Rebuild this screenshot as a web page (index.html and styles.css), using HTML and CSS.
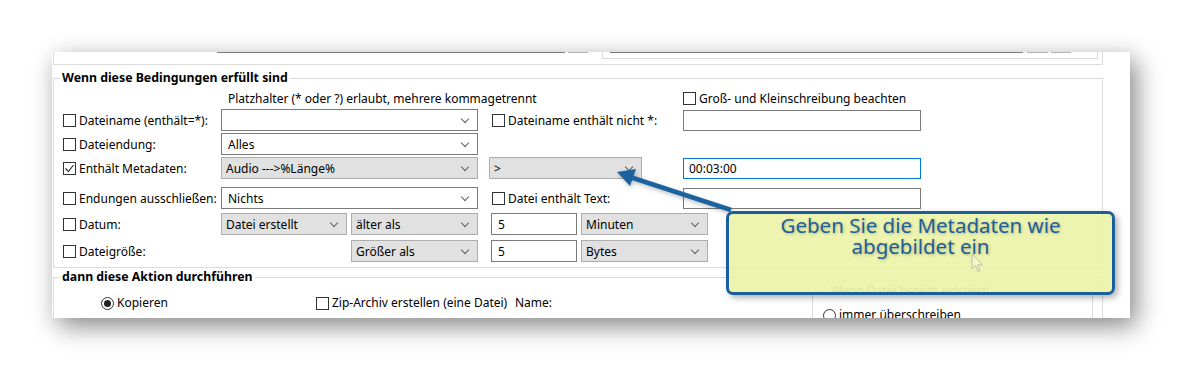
FILE: index.html
```html
<!DOCTYPE html>
<html lang="de">

<head>
    <meta charset="UTF-8">
    <title>Bedingungen</title>
    <link rel="stylesheet" href="styles.css">
</head>

<body>
    <div class="shot">
        <div class="panel">
            <!-- Rest des vorherigen Bereichs -->
            <div class="prev">
                <div class="prev-field left"></div>
                <div class="prev-btn"></div>
                <div class="prev-group">
                    <div class="prev-field right"></div>
                    <div class="prev-btn first"></div>
                    <div class="prev-btn"></div>
                </div>
            </div>

            <fieldset class="group cond">
                <legend>Wenn diese Bedingungen erfüllt sind</legend>
                <div class="rows">
                    <div class="hint-row">
                        <span class="hint">Platzhalter (* oder ?) erlaubt, mehrere kommagetrennt</span>
                        <label class="check"><span class="box"></span>Groß- und Kleinschreibung beachten</label>
                    </div>

                    <div class="row r1">
                        <label class="check lbl"><span class="box"></span>Dateiname (enthält=*):</label>
                        <div class="combo w-full"></div>
                        <label class="check lbl2"><span class="box"></span>Dateiname enthält nicht *:</label>
                        <div class="text w-edit"></div>
                    </div>

                    <div class="row r2">
                        <label class="check lbl"><span class="box"></span>Dateiendung:</label>
                        <div class="combo w-full">Alles</div>
                    </div>

                    <div class="row r3">
                        <label class="check lbl"><span class="box on"><svg width="11" height="11" viewBox="0 0 11 11"><polyline points="1.5,5.5 4.5,8.5 9.5,2" fill="none" stroke="#222" stroke-width="1.1"/></svg></span>Enthält Metadaten:</label>
                        <div class="combo list w-full">Audio ---&gt;%Länge%</div>
                        <div class="combo list w-op">&gt;</div>
                        <div class="text w-edit focus">00:03:00</div>
                    </div>

                    <div class="row r4">
                        <label class="check lbl"><span class="box"></span>Endungen ausschließen:</label>
                        <div class="combo w-full">Nichts</div>
                        <label class="check lbl2"><span class="box"></span>Datei enthält Text:</label>
                        <div class="text w-edit"></div>
                    </div>

                    <div class="row r5">
                        <label class="check lbl"><span class="box"></span>Datum:</label>
                        <div class="combo list w-half">Datei erstellt</div>
                        <div class="combo list w-half2 next">älter als</div>
                        <div class="text w-num">5</div>
                        <div class="combo list w-unit">Minuten</div>
                    </div>

                    <div class="row r6">
                        <label class="check lbl"><span class="box"></span>Dateigröße:</label>
                        <div class="combo list w-half2 skip">Größer als</div>
                        <div class="text w-num">5</div>
                        <div class="combo list w-unit">Bytes</div>
                    </div>
                </div>
            </fieldset>

            <fieldset class="group action">
                <legend>dann diese Aktion durchführen</legend>
                <div class="action-body">
                    <label class="radio copy"><span class="dot on"></span>Kopieren</label>
                    <label class="check zip"><span class="box"></span>Zip-Archiv erstellen (eine Datei)</label>
                    <span class="name">Name:</span>
                    <fieldset class="sub">
                        <legend>Wenn Datei bereits existiert:</legend>
                        <label class="radio"><span class="dot"></span>immer überschreiben</label>
                    </fieldset>
                </div>
            </fieldset>
        </div>

        <svg class="arrow" width="1182" height="371" viewBox="0 0 1182 371">
            <line x1="731" y1="210" x2="630" y2="177" stroke="#1a62a0" stroke-width="4.5"/>
            <polygon points="617,172 636,169 630,186" fill="#1a62a0"/>
        </svg>

        <div class="tip">
            Geben Sie die Metadaten wie<br>abgebildet ein
            <svg class="cursor" width="14" height="21" viewBox="0 0 14 21">
                <path d="M1 1 L1 16 L4.5 12.5 L7 18.5 L9 17.6 L6.6 11.8 L11.5 11.8 Z" fill="rgba(255,255,255,.35)" stroke="#b9bfa0" stroke-width="1"/>
            </svg>
        </div>
    </div>
</body>

</html>
```

FILE: styles.css
```css
* {
    box-sizing: border-box;
}

body {
    margin: 0;
    background: #fff;
    font-family: "Noto Sans", "Liberation Sans", sans-serif;
    font-size: 12px;
    color: #000;
}

.shot {
    position: relative;
    width: 1182px;
    height: 371px;
    padding: 52px 0 0 52px;
    overflow: hidden;
}

.panel {
    width: 1078px;
    height: 266px;
    background: #fff;
    overflow: hidden;
    box-shadow: 6px 8px 24px rgba(0, 0, 0, 0.48);
}


/* Reste des oberen Bereichs */

.prev {
    display: flex;
    align-items: flex-start;
    width: 1050px;
    height: 13px;
    margin-left: 1px;
    border: 1px solid #dcdcdc;
    border-top: 0;
}

.prev-field {
    height: 1px;
    background: #7a7a7a;
}

.prev-field.left {
    width: 348px;
    margin-left: 163px;
}

.prev-field.right {
    width: 413px;
    margin-left: 7px;
}

.prev-btn {
    width: 20px;
    height: 1px;
    margin-left: 3px;
    background: #b4b4b4;
}

.prev-btn.first {
    width: 21px;
    margin-left: 4px;
}

.prev-group {
    display: flex;
    align-items: flex-start;
    width: 496px;
    height: 7px;
    margin-left: 14px;
    border: 1px solid #dcdcdc;
    border-top: 0;
}


/* Gruppenrahmen */

.group {
    width: 1050px;
    min-width: 0;
    margin: 5px 0 0 1px;
    padding: 0 0 5px 0;
    border: 1px solid #dcdcdc;
}

.group > legend {
    margin-left: 6px;
    padding: 0 2px;
    font-weight: 700;
    font-size: 12.3px;
    line-height: 16px;
}

.group.action {
    margin-top: 1px;
    height: 60px;
}

.rows {
    display: flex;
    flex-direction: column;
    padding: 5px 0 0 9px;
}

.hint-row {
    display: flex;
    align-items: center;
    height: 14px;
}

.hint {
    width: 455px;
    margin-left: 165px;
}

.row {
    display: flex;
    align-items: center;
    height: 22px;
}

.row.r1 {
    margin-top: 4px;
}

.row.r2,
.row.r3 {
    margin-top: 2px;
}

.row.r4 {
    margin-top: 8px;
}

.row.r5 {
    margin-top: 4px;
}

.row.r6 {
    margin-top: 5px;
}


/* Kontrollkästchen */

.check {
    display: flex;
    align-items: center;
    gap: 3px;
    white-space: nowrap;
}

.box {
    display: flex;
    align-items: center;
    justify-content: center;
    width: 13px;
    height: 13px;
    border: 1px solid #333;
    background: #fff;
    flex: none;
}

.lbl {
    width: 158px;
}

.lbl2 {
    width: 191px;
    margin-left: 14px;
}

.radio {
    display: flex;
    align-items: center;
    gap: 3px;
    white-space: nowrap;
}

.dot {
    display: flex;
    align-items: center;
    justify-content: center;
    width: 13px;
    height: 13px;
    border: 1px solid #333;
    border-radius: 50%;
    background: #fff;
}

.dot.on::after {
    content: "";
    width: 7px;
    height: 7px;
    border-radius: 50%;
    background: #222;
}


/* Auswahllisten und Eingabefelder */

.combo {
    position: relative;
    display: flex;
    align-items: center;
    height: 22px;
    padding-left: 6px;
    border: 1px solid #7a7a7a;
    background: #fff;
    white-space: nowrap;
}

.combo::after {
    content: "";
    position: absolute;
    right: 9px;
    top: 6px;
    width: 5px;
    height: 5px;
    border-right: 1px solid #606060;
    border-bottom: 1px solid #606060;
    transform: rotate(45deg);
}

.combo.list {
    padding-left: 4px;
    border-color: #adadad;
    background: #e1e1e1;
}

.text {
    display: flex;
    align-items: center;
    height: 21px;
    padding-left: 5px;
    border: 1px solid #7a7a7a;
    background: #fff;
}

.text.focus {
    border-color: #0078d7;
}

.w-full {
    width: 257px;
}

.w-op {
    width: 153px;
    margin-left: 11px;
}

.w-edit {
    width: 238px;
    margin-left: 41px;
}

.row.r1 .w-edit,
.row.r4 .w-edit {
    margin-left: 0;
}

.w-half {
    width: 126px;
}

.w-half2 {
    width: 127px;
}

.w-half2.next {
    margin-left: 4px;
}

.w-half2.skip {
    margin-left: 130px;
}

.w-num {
    width: 86px;
    height: 22px;
    margin-left: 13px;
    padding-left: 6px;
}

.w-unit {
    width: 127px;
    margin-left: 4px;
}


/* Aktion */

.action-body {
    display: flex;
    align-items: flex-start;
    padding: 11px 0 0 9px;
    line-height: 14px;
}

.copy {
    width: 215px;
    margin-left: 38px;
}

.zip {
    width: 199px;
}

.name {
    width: 297px;
}

.sub {
    width: 281px;
    min-width: 0;
    margin: -12px 0 0 0;
    padding: 10px 0 0 10px;
    border: 1px solid #dcdcdc;
}

.sub > legend {
    margin-left: 6px;
    padding: 0 2px;
    line-height: 14px;
    color: #555;
}


/* Hinweis mit Pfeil */

.arrow {
    position: absolute;
    left: 0;
    top: 0;
    pointer-events: none;
    filter: drop-shadow(1px 2px 2px rgba(0, 0, 0, 0.25));
}

.tip {
    position: absolute;
    left: 726px;
    top: 211px;
    width: 389px;
    height: 84px;
    padding-top: 1px;
    border: 3px solid #1a5e9a;
    border-radius: 7px;
    background: rgba(234, 243, 166, 0.9);
    box-shadow: 3px 3px 6px rgba(0, 0, 0, 0.3);
    color: #1d5e98;
    font-size: 20.5px;
    line-height: 21px;
    text-align: center;
    text-shadow: 1px 1px 3px rgba(0, 0, 0, 0.25);
}

.cursor {
    position: absolute;
    left: 242px;
    top: 39px;
}
```
